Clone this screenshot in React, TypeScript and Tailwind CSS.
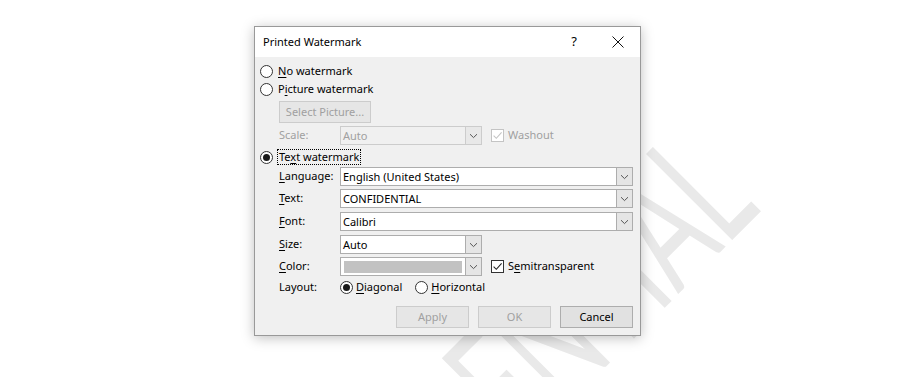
import React from 'react';

const ui = "font-['Noto_Sans','Open_Sans',sans-serif]";

function U({ children }: { children: React.ReactNode }) {
  return <span className="underline decoration-1 underline-offset-[2px]">{children}</span>;
}

function Radio({ checked }: { checked?: boolean }) {
  return (
    <span className="flex h-[13px] w-[13px] shrink-0 items-center justify-center rounded-full border border-[#333] bg-white">
      {checked && <span className="h-[7px] w-[7px] rounded-full bg-[#1a1a1a]" />}
    </span>
  );
}

function Check({ disabled }: { disabled?: boolean }) {
  return (
    <span
      className={`flex h-[13px] w-[13px] shrink-0 items-center justify-center border bg-white ${
        disabled ? 'border-[#c4c4c4]' : 'border-[#333]'
      }`}
    >
      <svg width="11" height="11" viewBox="0 0 11 11">
        <path
          d="M1.6 5.6 L4.3 8.3 L9.6 2.4"
          fill="none"
          stroke={disabled ? '#c4c4c4' : '#222'}
          strokeWidth="1.1"
        />
      </svg>
    </span>
  );
}

function Chevron() {
  return (
    <svg width="9" height="6" viewBox="0 0 9 6">
      <path d="M1 1.2 L4.5 4.6 L8 1.2" fill="none" stroke="#555" strokeWidth="1" />
    </svg>
  );
}

function Combo({
  value,
  wide,
  disabled,
  swatch,
}: {
  value?: string;
  wide?: boolean;
  disabled?: boolean;
  swatch?: boolean;
}) {
  return (
    <div
      className={`flex h-[19px] shrink-0 border ${wide ? 'w-[293px]' : 'w-[142px]'} ${
        disabled ? 'border-[#cccccc] bg-[#f0f0f0] text-[#a0a0a0]' : 'border-[#adadad] bg-white text-black'
      }`}
    >
      <div className="flex flex-1 items-center pl-[2px] leading-none">
        {swatch ? <div className="ml-[1px] h-[12px] w-[118px] bg-[#c2c2c2]" /> : value}
      </div>
      <div
        className={`flex w-[16px] items-center justify-center border-l ${
          disabled ? 'border-[#cccccc] bg-[#e8e8e8]' : 'border-[#adadad] bg-[#e5e5e5]'
        }`}
      >
        <Chevron />
      </div>
    </div>
  );
}

function Btn({ label, disabled, w = 'w-[73px]' }: { label: string; disabled?: boolean; w?: string }) {
  return (
    <div
      className={`flex h-[22px] ${w} items-center justify-center border ${
        disabled ? 'border-[#cccccc] bg-[#e6e6e6] text-[#a0a0a0]' : 'border-[#adadad] bg-[#e1e1e1] text-black'
      }`}
    >
      {label}
    </div>
  );
}

function Field({ label, children, mt }: { label: React.ReactNode; children: React.ReactNode; mt: string }) {
  return (
    <div className={`flex items-center pl-[24px] ${mt}`}>
      <div className="w-[61px]">{label}</div>
      {children}
    </div>
  );
}

export default function App() {
  return (
    <div className="relative h-[377px] w-[900px] overflow-hidden bg-white">
      {/* watermark behind the dialog */}
      <div className="absolute left-[762px] top-[210px] h-0 w-0 -rotate-45">
        <span className="absolute right-0 bottom-[-11px] origin-[100%_88.7%] scale-y-[1.7] whitespace-nowrap font-['Lato',sans-serif] text-[100px] leading-none text-[#e9e9e9]">
          CONFIDENTIAL
        </span>
      </div>

      <div
        className={`absolute left-[254px] top-[26px] flex h-[310px] w-[387px] flex-col border border-[#999] bg-[#f0f0f0] text-[11px] text-black shadow-[0_2px_12px_rgba(0,0,0,0.25)] ${ui}`}
      >
        <div className="flex h-[30px] items-center bg-white pl-[8px]">
          <span>Printed Watermark</span>
          <div className="ml-auto flex items-center gap-[32px] pr-[16px]">
            <span className="w-[12px] text-center text-[13px]">?</span>
            <svg width="12" height="12" viewBox="0 0 12 12">
              <path d="M0.5 0.5 L11.5 11.5 M11.5 0.5 L0.5 11.5" stroke="#111" strokeWidth="1" />
            </svg>
          </div>
        </div>

        <div className="flex flex-1 flex-col">
          <div className="mt-[5px] flex h-[18px] items-center gap-[5px] pl-[5px]">
            <Radio />
            <span>
              <U>N</U>o watermark
            </span>
          </div>
          <div className="flex h-[18px] items-center gap-[5px] pl-[5px]">
            <Radio />
            <span>
              P<U>i</U>cture watermark
            </span>
          </div>
          <div className="mt-[3px] pl-[24px]">
            <Btn label="Select Picture..." disabled w="w-[92px]" />
          </div>
          <Field label={<span className="text-[#a0a0a0]">Scale:</span>} mt="mt-[3px]">
            <Combo value="Auto" disabled />
            <div className="ml-[9px] flex items-center gap-[4px] text-[#a0a0a0]">
              <Check disabled />
              <span>Washout</span>
            </div>
          </Field>
          <div className="mt-[2px] flex h-[20px] items-center gap-[4px] pl-[5px]">
            <Radio checked />
            <span className="border border-dotted border-black px-[1px] leading-[14px]">
              Te<U>x</U>t watermark
            </span>
          </div>
          <Field label={<><U>L</U>anguage:</>} mt="mt-0">
            <Combo value="English (United States)" wide />
          </Field>
          <Field label={<><U>T</U>ext:</>} mt="mt-[3px]">
            <Combo value="CONFIDENTIAL" wide />
          </Field>
          <Field label={<><U>F</U>ont:</>} mt="mt-[4px]">
            <Combo value="Calibri" wide />
          </Field>
          <Field label={<><U>S</U>ize:</>} mt="mt-[4px]">
            <Combo value="Auto" />
          </Field>
          <Field label={<><U>C</U>olor:</>} mt="mt-[3px]">
            <Combo swatch />
            <div className="ml-[9px] flex items-center gap-[4px]">
              <Check />
              <span>
                S<U>e</U>mitransparent
              </span>
            </div>
          </Field>
          <Field label="Layout:" mt="mt-[2px] h-[18px]">
            <Radio checked />
            <span className="ml-[3px]">
              <U>D</U>iagonal
            </span>
            <span className="ml-[13px]">
              <Radio />
            </span>
            <span className="ml-[3px]">
              <U>H</U>orizontal
            </span>
          </Field>
          <div className="mt-[10px] flex justify-end gap-[9px] pr-[7px]">
            <Btn label="Apply" disabled />
            <Btn label="OK" disabled />
            <Btn label="Cancel" />
          </div>
        </div>
      </div>
    </div>
  );
}
